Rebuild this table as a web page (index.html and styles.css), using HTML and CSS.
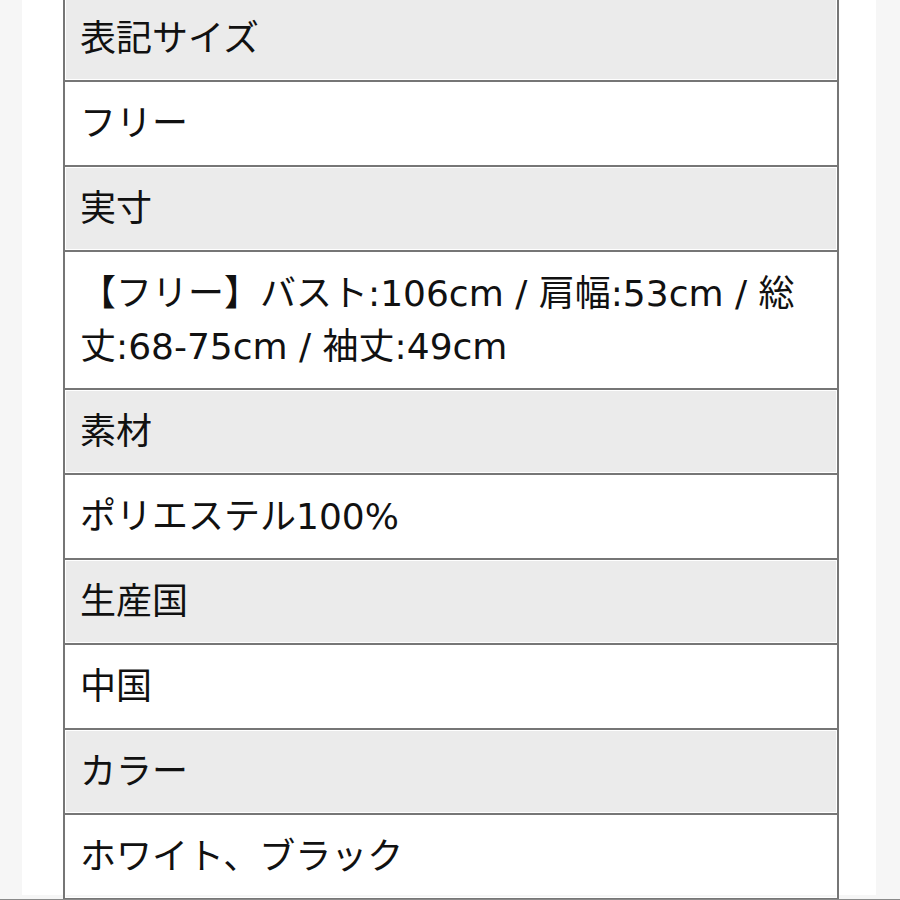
FILE: index.html
```html
<!DOCTYPE html>
<html lang="ja">
<head>
<meta charset="utf-8">
<link rel="stylesheet" href="styles.css">
</head>
<body>
<div class="page">
  <table class="spec">
    <tr class="head"><td>表記サイズ</td></tr>
    <tr><td>フリー</td></tr>
    <tr class="head"><td>実寸</td></tr>
    <tr><td>【フリー】バスト:106cm / 肩幅:53cm / 総丈:68-75cm / 袖丈:49cm</td></tr>
    <tr class="head"><td>素材</td></tr>
    <tr><td>ポリエステル100%</td></tr>
    <tr class="head"><td>生産国</td></tr>
    <tr><td>中国</td></tr>
    <tr class="head"><td>カラー</td></tr>
    <tr><td>ホワイト、ブラック</td></tr>
  </table>
</div>
<div class="bottom-line"></div>
</body>
</html>
```

FILE: styles.css
```css
html, body {
  margin: 0;
  padding: 0;
  height: 100%;
  overflow: hidden;
}
body {
  background: #f6f6f6;
  font-family: "DejaVu Sans", "Noto Sans CJK JP", sans-serif;
  color: #111;
  position: relative;
}
.page {
  margin: 0 24px 0 22px;
  background: #fff;
  height: 100%;
  padding: 0 37px 0 41px;
  box-sizing: border-box;
}
.spec {
  width: 776px;
  border-collapse: collapse;
  margin-top: -5px;
}
.spec td {
  border: 2px solid #767676;
  padding: 15px 15px 15px;
  font-size: 36px;
  line-height: 53px;
  box-shadow: inset 1px 1px 0 #fff, inset -1px -1px 0 #fff;
}
.spec tr.head td {
  background: #ebebeb;
}
.bottom-line {
  position: absolute;
  left: 0;
  right: 0;
  bottom: 0;
  height: 1px;
  background: #8a8a8a;
}
```
